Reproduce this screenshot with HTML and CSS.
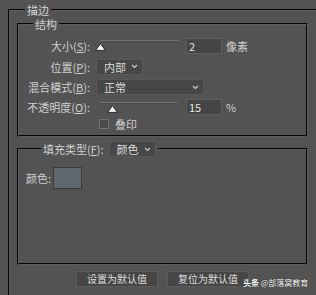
FILE: index.html
```html
<!DOCTYPE html>
<html lang="zh-CN">
<head>
    <meta charset="UTF-8">
    <title>描边</title>
    <link rel="stylesheet" href="styles.css">
</head>
<body>
    <fieldset class="panel">
        <legend class="panel-title">描边</legend>

        <fieldset class="group">
            <legend class="group-title">结构</legend>
            <div class="form-grid">
                <label class="field-label">大小(<u>S</u>):</label>
                <div class="field">
                    <div class="slider">
                        <div class="track"></div>
                        <svg class="thumb" style="margin-left: calc(0% - 5px)" width="11" height="8" viewBox="0 0 11 8"><polygon points="5.5,0.6 10.4,7.4 0.6,7.4" fill="#f6f6f6" stroke="#2a2a2a" stroke-width="1"/></svg>
                    </div>
                    <div class="num-input">2</div>
                    <span class="unit">像素</span>
                </div>

                <label class="field-label">位置(<u>P</u>):</label>
                <div class="field">
                    <div class="select select-small">
                        <span>内部</span>
                        <svg width="7" height="5" viewBox="0 0 7 5"><polyline points="1,1 3.5,3.5 6,1" fill="none" stroke="#cfcfcf" stroke-width="1.1"/></svg>
                    </div>
                </div>

                <label class="field-label">混合模式(<u>B</u>):</label>
                <div class="field">
                    <div class="select select-wide">
                        <span>正常</span>
                        <svg width="7" height="5" viewBox="0 0 7 5"><polyline points="1,1 3.5,3.5 6,1" fill="none" stroke="#cfcfcf" stroke-width="1.1"/></svg>
                    </div>
                </div>

                <label class="field-label">不透明度(<u>O</u>):</label>
                <div class="field">
                    <div class="slider">
                        <div class="track"></div>
                        <svg class="thumb" style="margin-left: calc(15% - 5px)" width="11" height="8" viewBox="0 0 11 8"><polygon points="5.5,0.6 10.4,7.4 0.6,7.4" fill="#f6f6f6" stroke="#2a2a2a" stroke-width="1"/></svg>
                    </div>
                    <div class="num-input">15</div>
                    <span class="unit">%</span>
                </div>

                <span></span>
                <div class="field">
                    <span class="checkbox"></span>
                    <span class="check-label">叠印</span>
                </div>
            </div>
        </fieldset>

        <fieldset class="group fill-group">
            <legend class="fill-title">
                <span>填充类型(<u>F</u>):</span>
                <div class="select select-small">
                    <span>颜色</span>
                    <svg width="7" height="5" viewBox="0 0 7 5"><polyline points="1,1 3.5,3.5 6,1" fill="none" stroke="#cfcfcf" stroke-width="1.1"/></svg>
                </div>
            </legend>
            <div class="color-row">
                <span>颜色:</span>
                <div class="swatch"></div>
            </div>
        </fieldset>

        <div class="buttons">
            <button class="btn">设置为默认值</button>
            <button class="btn">复位为默认值</button>
        </div>
    </fieldset>

    <div class="watermark"><b>头条</b> @部落窝教育</div>
</body>
</html>
```

FILE: styles.css
```css
body {
    margin: 0;
    height: 295px;
    overflow: hidden;
    background-color: #535353;
    color: #d0d0d0;
    font-family: "Noto Sans CJK SC", "Noto Sans", sans-serif;
    font-size: 11px;
    position: relative;
}
fieldset {
    margin: 0;
    min-width: 0;
    border: 2px groove #5c5c5c;
}
legend {
    line-height: 14px;
}
u {
    text-decoration-thickness: 1px;
    text-underline-offset: 1px;
}
.panel {
    box-sizing: border-box;
    height: 292px;
    margin: 3px 0 0 8px;
    padding: 0 0 0 7px;
    border-right: none;
    border-bottom: none;
}
.panel-title {
    margin-left: 8px;
    padding: 0 2px;
    color: #d8d8d8;
}
.group {
    width: 287px;
    padding: 0 0 4px 0;
}
.group-title {
    margin-left: 14px;
    padding: 0 2px;
}
.form-grid {
    display: grid;
    grid-template-columns: 71px 1fr;
    grid-template-rows: 21px 21px 20px 20px 14px;
    column-gap: 6px;
    padding-top: 4px;
}
.field-label {
    text-align: right;
    align-self: center;
    line-height: 14px;
}
.field {
    display: flex;
    align-items: center;
}
.slider {
    align-self: flex-start;
    width: 78px;
    margin-left: 4px;
    padding-top: 5px;
}
.track {
    height: 1px;
    background-color: #747474;
    border-bottom: 1px solid #4a4a4a;
}
.thumb {
    display: block;
    margin-top: 1px;
}
.num-input {
    width: 32px;
    height: 14px;
    margin-left: 8px;
    padding-left: 2px;
    line-height: 14px;
    background-color: #454545;
    border: 1px solid #5e5e5e;
    color: #e6e6e6;
}
.unit {
    margin-left: 4px;
}
.select {
    display: flex;
    align-items: center;
    justify-content: space-between;
    height: 14px;
    padding: 0 4px 0 7px;
    background-color: #474747;
    border: 1px solid #595959;
    color: #dcdcdc;
    line-height: 14px;
}
.select-small {
    width: 34px;
}
.select-wide {
    width: 95px;
}
.checkbox {
    width: 8px;
    height: 8px;
    margin-left: 3px;
    border: 1px solid #727272;
    background-color: #4a4a4a;
}
.check-label {
    margin-left: 6px;
}
.fill-group {
    margin-top: 4px;
    padding-bottom: 74px;
}
.fill-title {
    display: flex;
    align-items: center;
    gap: 5px;
    margin-left: 22px;
    padding: 0 2px;
}
.color-row {
    display: flex;
    align-items: center;
    gap: 2px;
    margin: 10px 0 0 7px;
}
.swatch {
    width: 27px;
    height: 20px;
    background-color: #5f676e;
    border: 1px solid #3a3a3a;
}
.buttons {
    display: flex;
    justify-content: center;
    gap: 9px;
    width: 291px;
    margin-top: 6px;
}
.btn {
    width: 82px;
    height: 16px;
    padding: 0;
    font-family: inherit;
    font-size: 10px;
    line-height: 14px;
    color: #dedede;
    background-color: #464646;
    border: 1px solid #5a5a5a;
}
.watermark {
    position: absolute;
    left: 243px;
    top: 277px;
    font-size: 8px;
    line-height: 12px;
    color: #ffffff;
    text-shadow: 0 0 1px #000;
}
```
